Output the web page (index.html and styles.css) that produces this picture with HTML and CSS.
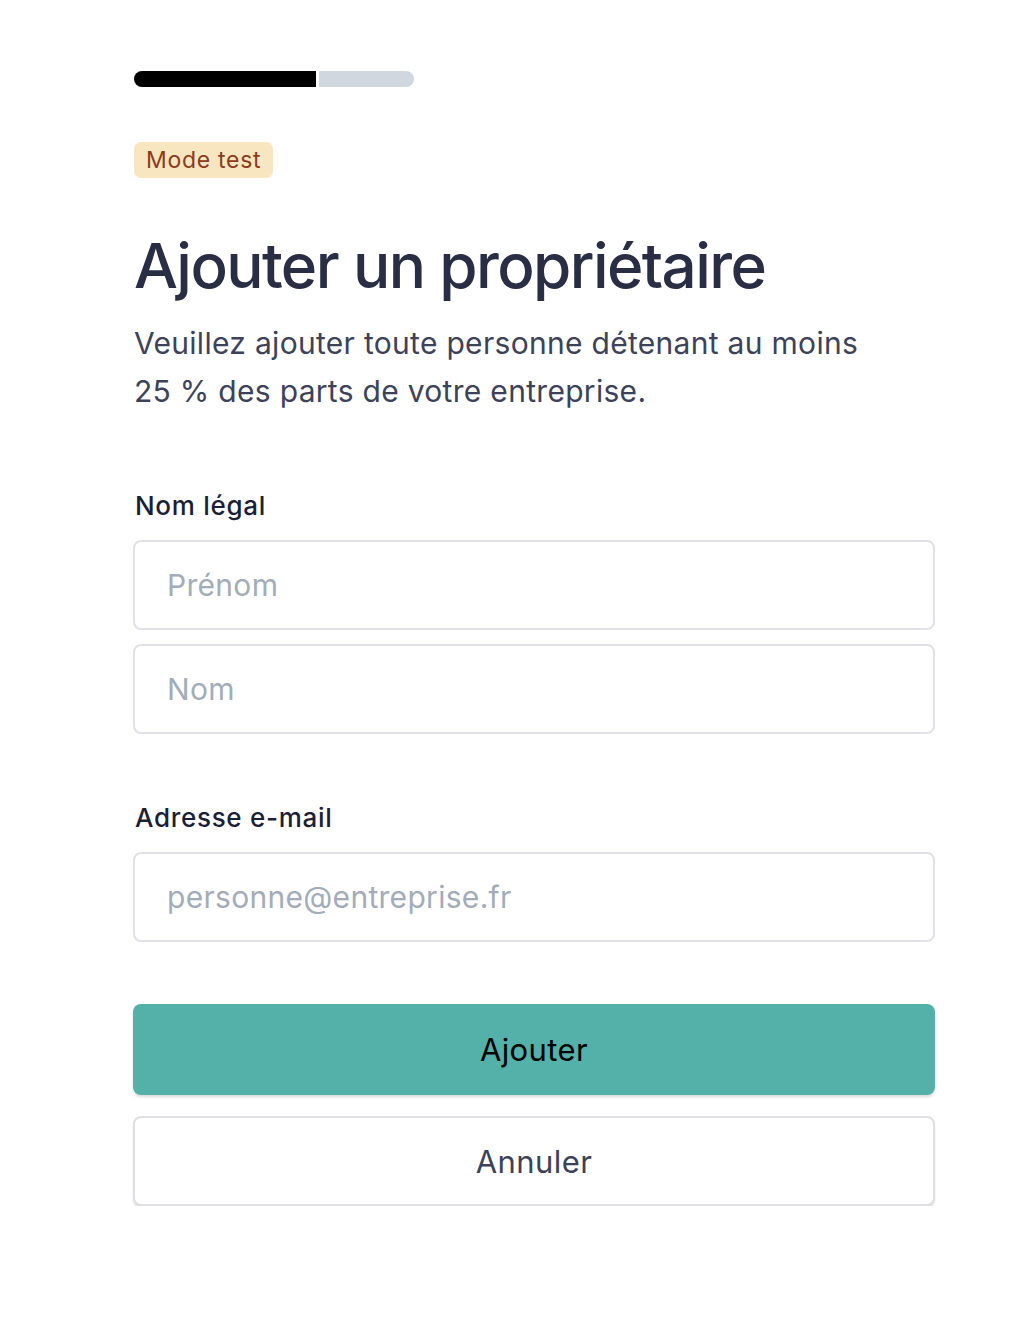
FILE: index.html
```html
<!DOCTYPE html>
<html lang="fr">
<head>
  <meta charset="UTF-8">
  <title>Ajouter un propriétaire</title>
  <link rel="stylesheet" href="styles.css">
</head>
<body>
  <div class="page">
    <div class="progress">
      <span class="step done"></span>
      <span class="step"></span>
    </div>

    <span class="badge">Mode test</span>

    <h1>Ajouter un propriétaire</h1>
    <p class="intro">Veuillez ajouter toute personne détenant au moins 25&nbsp;% des parts de votre entreprise.</p>

    <form class="form">
      <div class="field">
        <label>Nom légal</label>
        <input type="text" placeholder="Prénom">
        <input type="text" placeholder="Nom">
      </div>

      <div class="field">
        <label>Adresse e-mail</label>
        <input type="email" placeholder="personne@entreprise.fr">
      </div>

      <div class="actions">
        <button type="button" class="btn primary">Ajouter</button>
        <button type="button" class="btn secondary">Annuler</button>
      </div>
    </form>
  </div>
</body>
</html>
```

FILE: styles.css
```css
body {
  margin: 0;
  font-family: Inter, "Noto Sans", sans-serif;
  background: #fff;
}

.page {
  width: 802px;
  padding: 71px 0 0 133px;
}

.progress {
  display: flex;
  gap: 3px;
  width: 280px;
  margin-left: 1px;
}

.step {
  height: 16px;
  background: #d1d7df;
}

.step.done {
  width: 182px;
  background: #000;
  border-radius: 8px 0 0 8px;
}

.step:last-child {
  flex: 1;
  border-radius: 0 8px 8px 0;
}

.badge {
  display: inline-block;
  margin: 55px 0 0 1px;
  padding: 0 12px;
  height: 36px;
  line-height: 36px;
  font-size: 23px;
  letter-spacing: 0.7px;
  color: #8d3b1b;
  background: #f7e6bf;
  border-radius: 7px;
}

h1 {
  margin: 50px 0 0 1px;
  font-size: 62px;
  font-weight: 500;
  letter-spacing: -1.6px;
  line-height: 76px;
  color: #2a2e45;
}

.intro {
  margin: 15px 0 0 1px;
  font-size: 30px;
  letter-spacing: 0.3px;
  line-height: 48px;
  color: #3d4258;
  width: 760px;
}

.form {
  margin-top: 75px;
}

.field {
  display: flex;
  flex-direction: column;
  gap: 14px;
}

.field + .field {
  margin-top: 68px;
}

.field label {
  font-size: 26px;
  font-weight: 500;
  letter-spacing: 0.7px;
  color: #1a1f36;
  margin-left: 2px;
  margin-bottom: 5px;
}

.field input {
  height: 90px;
  box-sizing: border-box;
  padding: 0 32px;
  border: 2px solid #e1e2e8;
  border-radius: 8px;
  font-family: inherit;
  font-size: 30px;
  letter-spacing: 0.3px;
  color: #1a1f36;
  outline: none;
}

.field input::placeholder {
  color: #a3acb9;
}

.actions {
  display: flex;
  flex-direction: column;
  gap: 21px;
  margin-top: 62px;
}

.btn {
  height: 91px;
  border-radius: 8px;
  font-family: inherit;
  font-size: 31px;
  letter-spacing: 0.4px;
  cursor: pointer;
}

.btn.primary {
  background: #53b1a9;
  border: none;
  color: #000;
  box-shadow: 0 2px 3px rgba(0, 0, 0, 0.15);
}

.btn.secondary {
  height: 90px;
  background: #fff;
  border: 2px solid #dfdfe4;
  color: #3c4257;
  box-shadow: 0 2px 2px rgba(0, 0, 0, 0.12);
}
```
